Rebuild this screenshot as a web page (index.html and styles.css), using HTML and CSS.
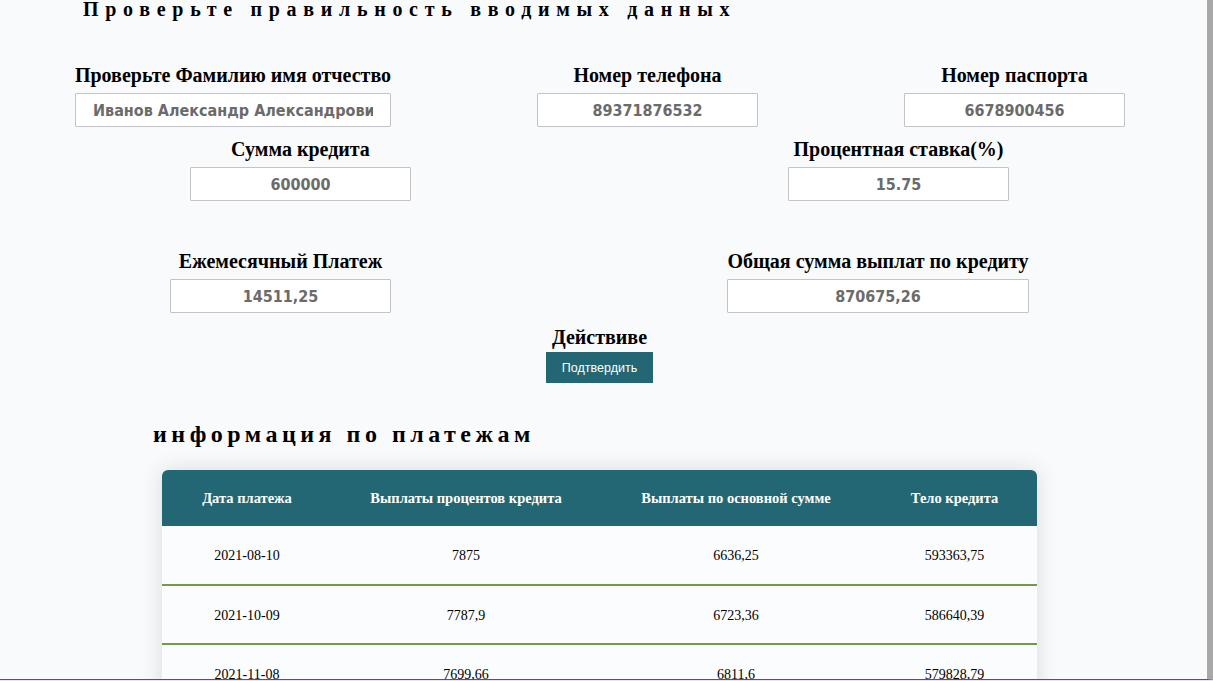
FILE: index.html
```html
<!DOCTYPE html>
<html lang="ru">
<head>
<meta charset="utf-8">
<title>Проверка данных</title>
<link rel="stylesheet" href="styles.css">
</head>
<body>
<div class="window">
  <div class="page">
    <h1 class="title">Проверьте правильность вводимых данных</h1>

    <div class="row row-1">
      <div class="field w-316">
        <label class="label">Проверьте Фамилию имя отчество</label>
        <input class="box" type="text" readonly value="Иванов Александр Александрович">
      </div>
      <div class="field w-221">
        <label class="label">Номер телефона</label>
        <input class="box" type="text" readonly value="89371876532">
      </div>
      <div class="field w-221">
        <label class="label">Номер паспорта</label>
        <input class="box" type="text" readonly value="6678900456">
      </div>
    </div>

    <div class="row row-2">
      <div class="field w-221">
        <label class="label">Сумма кредита</label>
        <input class="box" type="text" readonly value="600000">
      </div>
      <div class="field w-221">
        <label class="label">Процентная ставка(%)</label>
        <input class="box" type="text" readonly value="15.75">
      </div>
    </div>

    <div class="row row-3">
      <div class="field w-221">
        <label class="label">Ежемесячный Платеж</label>
        <input class="box" type="text" readonly value="14511,25">
      </div>
      <div class="field w-302">
        <label class="label">Общая сумма выплат по кредиту</label>
        <input class="box" type="text" readonly value="870675,26">
      </div>
    </div>

    <div class="action">
      <div class="label">Действиве</div>
      <button class="btn" type="button">Подтвердить</button>
    </div>

    <h2 class="subtitle">информация по платежам</h2>

    <div class="table-wrap">
      <table class="pay">
        <thead>
          <tr>
            <th class="c1">Дата платежа</th>
            <th class="c2">Выплаты процентов кредита</th>
            <th class="c3">Выплаты по основной сумме</th>
            <th class="c4">Тело кредита</th>
          </tr>
        </thead>
        <tbody>
          <tr><td>2021-08-10</td><td>7875</td><td>6636,25</td><td>593363,75</td></tr>
          <tr><td>2021-10-09</td><td>7787,9</td><td>6723,36</td><td>586640,39</td></tr>
          <tr><td>2021-11-08</td><td>7699,66</td><td>6811,6</td><td>579828,79</td></tr>
          <tr><td>2021-12-08</td><td>7610,25</td><td>6901</td><td>572927,79</td></tr>
        </tbody>
      </table>
    </div>
  </div>
</div>
</body>
</html>
```
FILE: styles.css
```css
html, body {
  margin: 0;
  padding: 0;
  height: 681px;
  overflow: hidden;
  background: #ece4f0;
}

.window {
  height: 679px;
  border-bottom: 1px solid #5b5263;
  border-right: 6px solid #a8a8a8;
  background: #f9fafc;
  overflow: hidden;
  font-family: "Liberation Serif", "Times New Roman", serif;
  color: #000;
}

.page {
  display: flex;
  flex-direction: column;
}

.title {
  margin: -2px 0 0 83px;
  font-size: 20px;
  line-height: 22px;
  font-weight: bold;
  letter-spacing: 6.7px;
  white-space: nowrap;
}

.row {
  display: flex;
  align-items: flex-start;
}

.row-1 { margin-top: 44px; padding-left: 75px; gap: 146px; }
.row-2 { margin-top: 11px; padding-left: 190px; gap: 377px; }
.row-3 { margin-top: 49px; padding-left: 170px; gap: 336px; }

.field {
  display: flex;
  flex-direction: column;
  align-items: center;
}

.w-316 { width: 316px; }
.w-221 { width: 221px; }
.w-302 { width: 302px; }

.label {
  display: block;
  font-size: 20px;
  line-height: 22px;
  font-weight: bold;
  white-space: nowrap;
  margin-bottom: 7px;
}

.box {
  box-sizing: border-box;
  width: 100%;
  height: 34px;
  margin: 0;
  padding: 0 17px;
  border: 1px solid #c4c4c8;
  border-radius: 1px;
  background: #fff;
  font-family: "DejaVu Sans Condensed", "DejaVu Sans", Verdana, sans-serif;
  font-stretch: condensed;
  font-size: 16px;
  font-weight: bold;
  color: #6b6b6b;
  text-align: center;
  outline: none;
}

.action {
  margin-top: 13px;
  display: flex;
  flex-direction: column;
  align-items: center;
  width: 1199px;
}

.action .label {
  margin-bottom: 4px;
}

.btn {
  width: 107px;
  height: 31px;
  border: none;
  border-radius: 0;
  background: #236774;
  color: #fff;
  font-family: "Liberation Sans", Arial, sans-serif;
  font-size: 12.5px;
  padding: 0;
}

.subtitle {
  margin: 37px 0 0 153px;
  font-size: 24px;
  line-height: 28px;
  font-weight: bold;
  letter-spacing: 4.5px;
  white-space: nowrap;
}

.table-wrap {
  margin: 22px 0 0 162px;
  width: 875px;
  border-radius: 6px 6px 0 0;
  box-shadow: 0 0 22px rgba(0, 0, 0, 0.13);
  overflow: hidden;
  background: #fbfcfd;
}

.pay {
  width: 875px;
  border-collapse: collapse;
  table-layout: fixed;
}

.pay th {
  background: #236774;
  color: #fff;
  font-size: 14.5px;
  font-weight: bold;
  height: 56px;
  padding: 0;
  text-align: center;
}

.c1 { width: 170px; }
.c2 { width: 268px; }
.c3 { width: 272px; }
.c4 { width: 165px; }

.pay td {
  box-sizing: border-box;
  height: 59px;
  padding: 2px 0 0;
  text-align: center;
  font-size: 14px;
  border-bottom: 2px solid #709b4c;
}
```
